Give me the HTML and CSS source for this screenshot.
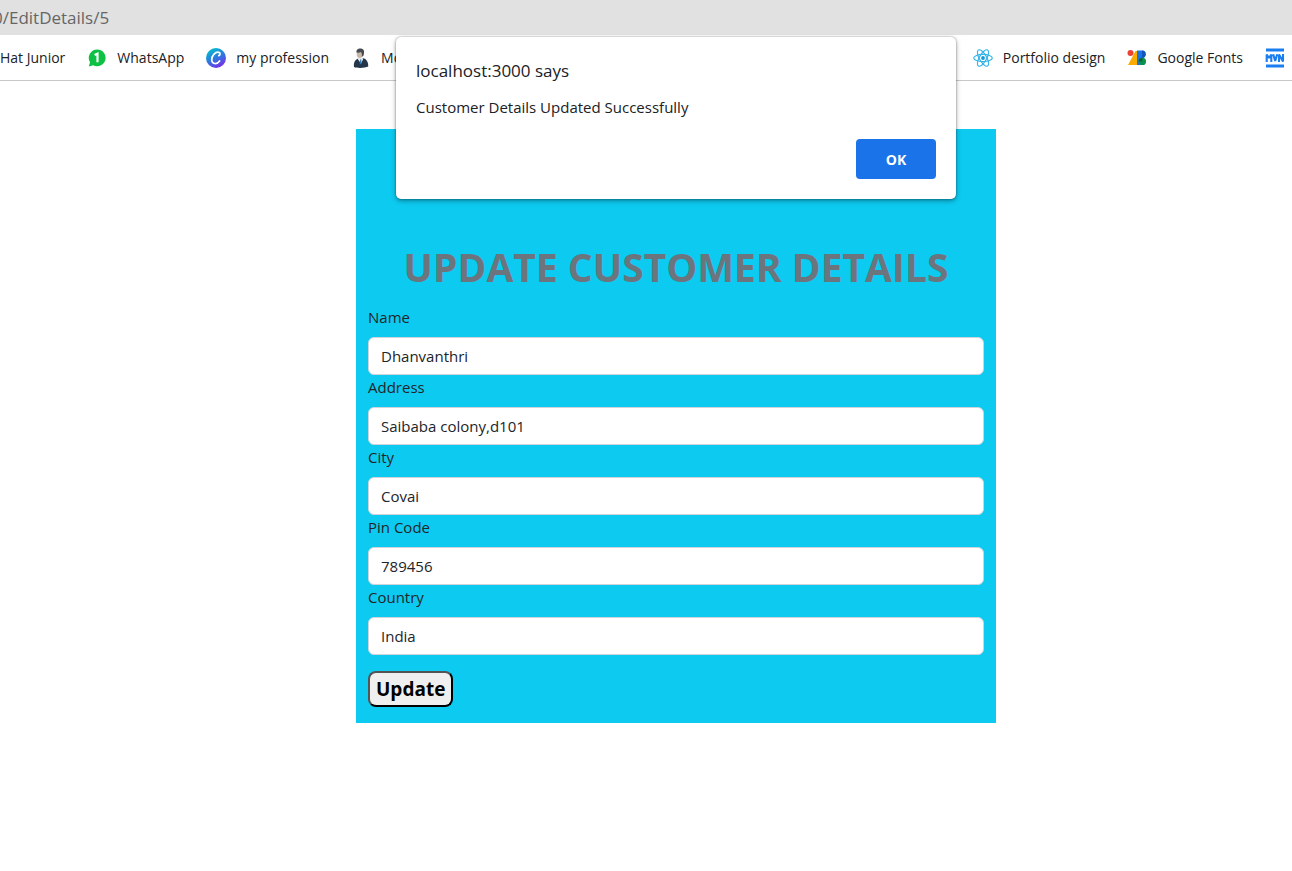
FILE: index.html
```html
<!DOCTYPE html>
<html lang="en">
<head>
<meta charset="utf-8">
<title>Edit Details</title>
<link rel="stylesheet" href="styles.css">
</head>
<body>
<header class="browser">
  <div class="address"><span class="address-text">0/EditDetails/5</span></div>
  <nav class="bookmarks">
    <div class="bookmark-group">
      <a class="bookmark" href="#">Hat Junior</a>
      <a class="bookmark" href="#">
        <svg class="icon" viewBox="0 0 20 20"><path d="M10.2 1.5a8.4 8.4 0 1 1-4 15.8L1.8 18.6 3 14.2A8.4 8.4 0 0 1 10.2 1.5z" fill="#0cc143"/><path d="M7.6 7.1 10.5 5.700V14.300" fill="none" stroke="#fff" stroke-width="2.200"/></svg>
        WhatsApp</a>
      <a class="bookmark" href="#">
        <svg class="icon" viewBox="0 0 20 20"><defs><linearGradient id="disc" x1="0.2" y1="0" x2="0.7" y2="1"><stop offset="0" stop-color="#00c4cc"/><stop offset="0.5" stop-color="#2b7be0"/><stop offset="1" stop-color="#7d2ae8"/></linearGradient></defs><circle cx="10" cy="10" r="10" fill="url(#disc)"/><path d="M12.800 7.600c1.500-.6 1.800-2.900 0-3.300C9.300 3.600 5.400 8 5.700 12c.3 4.600 5.400 4.500 7.900.9" fill="none" stroke="#fff" stroke-width="1.700" stroke-linecap="round"/></svg>
        my profession</a>
      <a class="bookmark" href="#">
        <svg class="icon" viewBox="0 0 20 20"><path d="M3 19c-.6-4 1-8 5-8.500l4-.2c3.500.4 5.500 4 5.200 8.200-3 1.600-11 1.900-14.200.5z" fill="#25364a"/><path d="M7.500 9.500h4l.5 2-2 4-3-4z" fill="#e8edf0"/><path d="M9.300 11.200l1 .3.200 4-1 1-.8-1z" fill="#3478ae"/><ellipse cx="8.700" cy="6" rx="3" ry="4" fill="#c9b7a5"/><path d="M5.500 4.500C5 1 8 .2 10 .6c3 .2 4 3.400 2.300 7.400l-1.500.8c.4-2 .1-3.500-.8-4.700-1.500.4-3 .8-4.500.4z" fill="#454b50"/></svg>
        Mo</a>
    </div>
    <div class="bookmark-group">
      <a class="bookmark" href="#">
        <svg class="icon" viewBox="0 0 20 20"><g fill="none" stroke="#35b5e9" stroke-width="1.200"><ellipse cx="10" cy="10" rx="9.300" ry="3.600"/><ellipse cx="10" cy="10" rx="9.300" ry="3.600" transform="rotate(60 10 10)"/><ellipse cx="10" cy="10" rx="9.300" ry="3.600" transform="rotate(120 10 10)"/></g><circle cx="10" cy="10" r="1.900" fill="#1599d8"/></svg>
        Portfolio design</a>
      <a class="bookmark" href="#">
        <svg class="icon" viewBox="0 0 20 20"><path d="M8.500 3H12v14H1z" fill="#f9ab00"/><circle cx="3.500" cy="5" r="3" fill="#ea4335"/><path d="M10 2.500h5a3.700 3.700 0 0 1 0 7.400 3.600 3.600 0 0 1 0 7.200h-5z" fill="#1a73e8"/><circle cx="15.300" cy="13.400" r="3.700" fill="#0d904f"/><path d="M11.700 13.400a3.700 3.700 0 0 1 3.600-3.700v3.700z" fill="#0d652d"/><path d="M15 2.500a3.700 3.700 0 0 1 0 7.400z" fill="#1257b8"/></svg>
        Google Fonts</a>
      <a class="bookmark" href="#" aria-label="MVN">
        <svg class="icon" viewBox="0 0 20 20"><path d="M1 2h18M1 18h18" stroke="#1a7df0" stroke-width="2.800"/><path d="M1.700 14V6.500L4 10l2.300-3.500V14M8.200 6.200 10.200 13l2-6.800M14 14V6.500l4 7V6" fill="none" stroke="#1a7df0" stroke-width="2.100" stroke-linejoin="bevel"/></svg></a>
    </div>
  </nav>
</header>
<main class="page">
  <form class="details">
    <h1 class="title">UPDATE CUSTOMER DETAILS</h1>
    <label class="label" for="name">Name</label>
    <input class="field" id="name" type="text" value="Dhanvanthri">
    <label class="label" for="address">Address</label>
    <input class="field" id="address" type="text" value="Saibaba colony,d101">
    <label class="label" for="city">City</label>
    <input class="field" id="city" type="text" value="Covai">
    <label class="label" for="pin">Pin Code</label>
    <input class="field" id="pin" type="text" value="789456">
    <label class="label" for="country">Country</label>
    <input class="field" id="country" type="text" value="India">
    <button class="update" type="button">Update</button>
  </form>
</main>
<div class="overlay">
  <section class="dialog" role="alertdialog" aria-labelledby="origin" aria-describedby="message">
    <h2 class="origin" id="origin">localhost:3000 says</h2>
    <p class="message" id="message">Customer Details Updated Successfully</p>
    <button class="ok" type="button">OK</button>
  </section>
</div>
</body>
</html>
```
FILE: styles.css
```css
* { box-sizing: border-box; }
body {
  margin: 0;
  background: #fff;
  color: #212529;
  font-family: "Open Sans", "Noto Sans", sans-serif;
  font-size: 15px;
  line-height: 24px;
  overflow-x: hidden;
}
.address {
  height: 35px;
  display: flex;
  align-items: center;
  background: #e1e1e1;
  color: #666;
  font-size: 17px;
  overflow: hidden;
}
.address-text { margin-left: -7px; }
.bookmarks {
  display: flex;
  justify-content: space-between;
  height: 46px;
  padding-right: 7px;
  border-bottom: 1px solid #c8c8c8;
  overflow: hidden;
}
.bookmark-group { display: flex; align-items: center; gap: 22px; }
.bookmark {
  display: flex;
  align-items: center;
  gap: 10px;
  color: #202124;
  font-size: 14px;
  text-decoration: none;
  white-space: nowrap;
}
.icon { width: 20px; height: 20px; flex: none; }
.page { display: flex; justify-content: center; padding: 48px 0 48px 60px; }
.details {
  width: 640px;
  padding: 114px 12px 16px;
  background: #0dcaf0;
}
.title {
  margin: 0 0 14px;
  color: #6c757d;
  font-size: 39px;
  font-weight: 700;
  line-height: 48px;
  text-align: center;
  white-space: nowrap;
}
.label { display: block; margin-bottom: 8px; }
.field {
  display: block;
  width: 100%;
  height: 38px;
  padding: 6px 12px;
  border: 1px solid #ced4da;
  border-radius: 6px;
  background: #fff;
  color: #212529;
  font: inherit;
}
.update {
  display: block;
  height: 36px;
  margin-top: 16px;
  padding: 0 6px;
  border: 2px outset #000;
  border-radius: 8px;
  background: #efefef;
  color: #000;
  font-family: inherit;
  font-size: 19px;
  font-weight: 700;
}
.overlay {
  position: absolute;
  top: 37px;
  left: 0;
  right: 0;
  display: flex;
  justify-content: center;
  padding-left: 60px;
}
.dialog {
  display: flex;
  flex-direction: column;
  width: 560px;
  padding: 22px 20px 20px;
  border-radius: 5px;
  background: #fff;
  box-shadow: 0 0 2px rgba(0, 0, 0, 0.4), 0 2px 5px rgba(0, 0, 0, 0.35);
  color: #202124;
}
.origin { margin: 0 0 12px; font-size: 17px; font-weight: 400; line-height: 24px; }
.message { margin: 0 0 20px; }
.ok {
  align-self: flex-end;
  width: 80px;
  height: 40px;
  border: 0;
  border-radius: 4px;
  background: #1a73e8;
  color: #fff;
  font-family: inherit;
  font-size: 14px;
  font-weight: 700;
}
```
